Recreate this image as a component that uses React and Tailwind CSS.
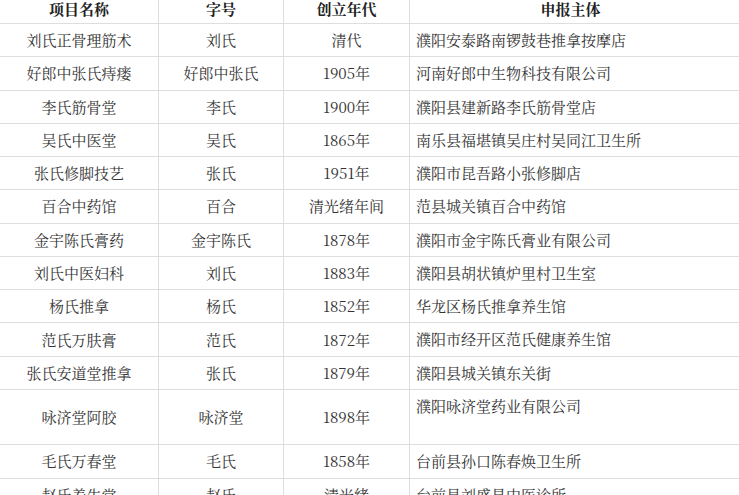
import React from "react";

const rows = [
  ["刘氏正骨理筋术", "刘氏", "清代", "濮阳安泰路南锣鼓巷推拿按摩店"],
  ["好郎中张氏痔瘘", "好郎中张氏", "1905年", "河南好郎中生物科技有限公司"],
  ["李氏筋骨堂", "李氏", "1900年", "濮阳县建新路李氏筋骨堂店"],
  ["吴氏中医堂", "吴氏", "1865年", "南乐县福堪镇吴庄村吴同江卫生所"],
  ["张氏修脚技艺", "张氏", "1951年", "濮阳市昆吾路小张修脚店"],
  ["百合中药馆", "百合", "清光绪年间", "范县城关镇百合中药馆"],
  ["金宇陈氏膏药", "金宇陈氏", "1878年", "濮阳市金宇陈氏膏业有限公司"],
  ["刘氏中医妇科", "刘氏", "1883年", "濮阳县胡状镇炉里村卫生室"],
  ["杨氏推拿", "杨氏", "1852年", "华龙区杨氏推拿养生馆"],
  ["范氏万肤膏", "范氏", "1872年", "濮阳市经开区范氏健康养生馆"],
  ["张氏安道堂推拿", "张氏", "1879年", "濮阳县城关镇东关街"],
  ["咏济堂阿胶", "咏济堂", "1898年", "濮阳咏济堂药业有限公司", "tall"],
  ["毛氏万春堂", "毛氏", "1858年", "台前县孙口陈春焕卫生所"],
  ["赵氏养生堂", "赵氏", "清光绪", "台前县刘盛昌中医诊所"],
];

const font = {
  fontFamily: '"Noto Serif CJK SC", "Liberation Serif", "Noto Sans CJK SC", serif',
};

export default function App() {
  return (
    <div
      className="w-[739px] h-[495px] overflow-hidden bg-white text-[#333] text-[15px] leading-[18px]"
      style={font}
    >
      <div className="grid grid-cols-[159px_125px_126px_1fr]">
        {["项目名称", "字号", "创立年代"].map((h) => (
          <div
            key={h}
            className="h-[24px] border-b border-r border-[#dedede] flex items-center justify-center pb-[5px] font-bold text-[#222]"
          >
            {h}
          </div>
        ))}
        <div className="h-[24px] border-b border-[#dedede] flex items-center justify-center pb-[5px] font-bold text-[#222] pr-[8px]">
          申报主体
        </div>
        {rows.map((r, i) => {
          const h = r[4] === "tall" ? "h-[55px]" : i === 12 ? "h-[34px]" : "h-[33.27px]";
          return (
            <React.Fragment key={i}>
              <div className={`${h} border-b border-r border-[#dedede] flex items-center justify-center`}>
                {r[0]}
              </div>
              <div className={`${h} border-b border-r border-[#dedede] flex items-center justify-center`}>
                {r[1]}
              </div>
              <div className={`${h} border-b border-r border-[#dedede] flex items-center justify-center`}>
                {r[2]}
              </div>
              <div className={`${h} border-b border-[#dedede] pl-[6px] pt-[7px]`}>
                {r[3]}
              </div>
            </React.Fragment>
          );
        })}
      </div>
    </div>
  );
}
